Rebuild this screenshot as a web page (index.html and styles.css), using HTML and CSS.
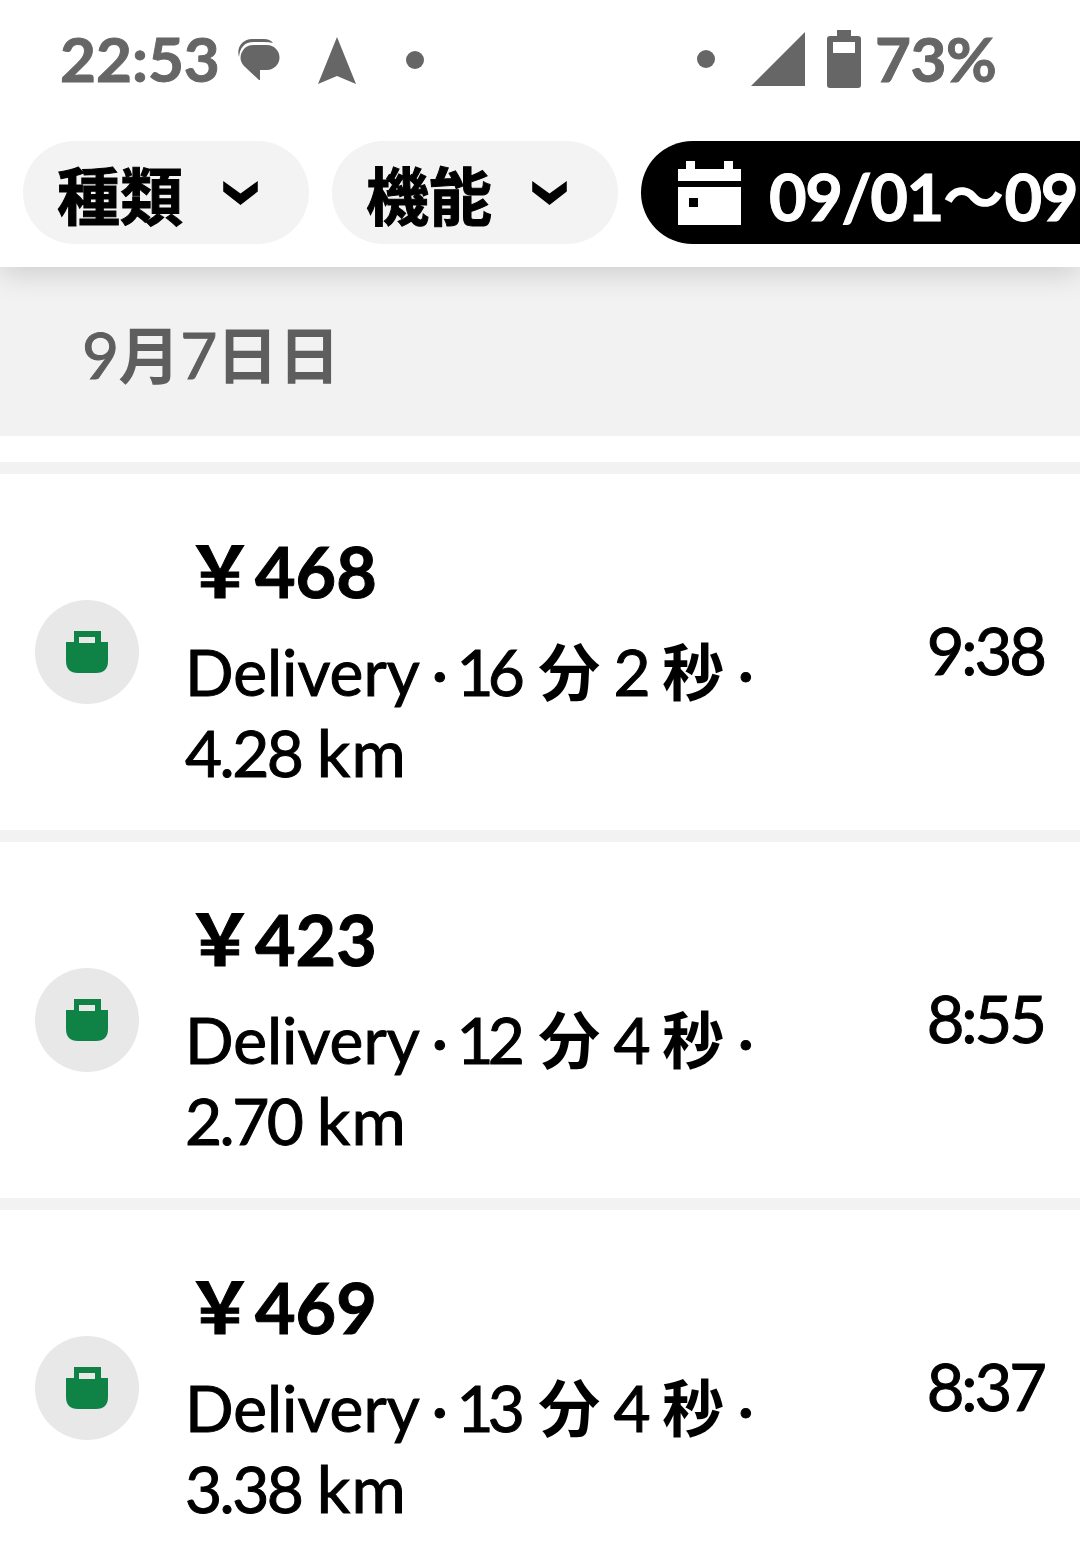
FILE: index.html
```
<!DOCTYPE html>
<html lang="ja">
<head>
  <meta charset="UTF-8">
  <meta name="viewport" content="width=device-width, initial-scale=1.0">
  <title>アクティビティ</title>
  <link rel="stylesheet" href="styles.css">
</head>
<body>
  <header class="header">
    <!-- Status bar -->
    <div class="status-bar">
      <span class="clock">22:53</span>
      <svg class="icon-chat" width="44" height="46" viewBox="0 0 44 46">
        <path d="M1 21C-2 11 5 3 14 3H26Q32 3 35 7Q31 6 26 6H16C6 6 2 12 1 21Z"/>
        <path d="M15 9H29A12.500 12.500 0 0 1 29 34H22V44H21L6 30A12.500 12.500 0 0 1 15 9Z"/>
      </svg>
      <svg class="icon-nav" width="40" height="48" viewBox="0 0 40 48">
        <path d="M20 0L39 47L20 39L1 47Z"/>
      </svg>
      <span class="dot"></span>
      <div class="status-right">
        <span class="dot"></span>
        <svg class="icon-signal" width="54" height="54" viewBox="0 0 54 54">
          <path d="M54 0V54H0Z"/>
        </svg>
        <svg class="icon-battery" width="34" height="58" viewBox="0 0 34 58">
          <path fill-rule="evenodd" d="M10 0H24V6H31Q34 6 34 9V55Q34 58 31 58H3Q0 58 0 55V9Q0 6 3 6H10ZM6 12V23H28V12Z"/>
        </svg>
        <span class="percent">73%</span>
      </div>
    </div>

    <!-- Filters -->
    <div class="filters">
      <button class="chip">
        <span class="jp">種類</span>
        <svg class="chevron" width="35" height="24" viewBox="0 0 36 25"><path d="M0 0L18 13L36 0V11L18 25L0 11Z"/></svg>
      </button>
      <button class="chip">
        <span class="jp">機能</span>
        <svg class="chevron" width="35" height="24" viewBox="0 0 36 25"><path d="M0 0L18 13L36 0V11L18 25L0 11Z"/></svg>
      </button>
      <button class="chip chip-active">
        <svg class="calendar" width="63" height="64" viewBox="0 0 63 64">
          <path fill-rule="evenodd" d="M8 0H17V8H46V0H55V8H63V20H0V8H8ZM0 26H63V64H0ZM11 37V46H20V37Z"/>
        </svg>
        <span class="range">09/01<span class="jp">～</span>09</span>
      </button>
    </div>
  </header>

  <main>
    <h2 class="date">9<span class="jp">月</span>7<span class="jp">日日</span></h2>

    <ul class="trips">
      <li class="trip">
        <div class="trip-icon">
          <svg width="42" height="42" viewBox="0 0 42 42"><path fill-rule="evenodd" d="M8 0H35V11H42V30Q42 42 30 42H12Q0 42 0 30V11H8ZM13 6V12H29V6Z"/></svg>
        </div>
        <div class="trip-info">
          <p class="fare"><span class="yen">￥</span>468</p>
          <p class="detail">Delivery · <span class="min">16</span> <span class="jp">分</span> <span class="sec">2</span> <span class="jp">秒</span> · <span class="dist">4.28</span> <span class="unit">km</span></p>
        </div>
        <time class="trip-time">9:38</time>
      </li>
      <li class="trip">
        <div class="trip-icon">
          <svg width="42" height="42" viewBox="0 0 42 42"><path fill-rule="evenodd" d="M8 0H35V11H42V30Q42 42 30 42H12Q0 42 0 30V11H8ZM13 6V12H29V6Z"/></svg>
        </div>
        <div class="trip-info">
          <p class="fare"><span class="yen">￥</span>423</p>
          <p class="detail">Delivery · <span class="min">12</span> <span class="jp">分</span> <span class="sec">4</span> <span class="jp">秒</span> · <span class="dist">2.70</span> <span class="unit">km</span></p>
        </div>
        <time class="trip-time">8:55</time>
      </li>
      <li class="trip">
        <div class="trip-icon">
          <svg width="42" height="42" viewBox="0 0 42 42"><path fill-rule="evenodd" d="M8 0H35V11H42V30Q42 42 30 42H12Q0 42 0 30V11H8ZM13 6V12H29V6Z"/></svg>
        </div>
        <div class="trip-info">
          <p class="fare"><span class="yen">￥</span>469</p>
          <p class="detail">Delivery · <span class="min">13</span> <span class="jp">分</span> <span class="sec">4</span> <span class="jp">秒</span> · <span class="dist">3.38</span> <span class="unit">km</span></p>
        </div>
        <time class="trip-time">8:37</time>
      </li>
    </ul>
  </main>
</body>
</html>
```
FILE: styles.css
```
* {
  box-sizing: border-box;
  margin: 0;
  padding: 0;
}

body {
  height: 1556px;
  overflow: hidden;
  background: #fff;
  color: #000;
  font-family: "Lato", "Noto Sans CJK JP", sans-serif;
}

.jp, .yen {
  font-family: "Noto Sans CJK JP", sans-serif;
  font-weight: 700;
  line-height: 1;
}

.jp {
  font-size: 62px;
  letter-spacing: 0;
  -webkit-text-stroke: 0;
}

.header {
  position: relative;
  height: 267px;
  background: #fff;
  box-shadow: 0 4px 30px rgba(0, 0, 0, 0.18);
}

/* Status bar */
.status-bar {
  display: flex;
  align-items: center;
  height: 120px;
  padding: 0 83px 2px 60px;
  color: #666;
  font-size: 62px;
  font-weight: 700;
  line-height: 116px;
  -webkit-text-stroke: 1px;
}

.status-bar svg {
  fill: #666;
}

.clock, .percent {
  padding-bottom: 3px;
}

.clock {
  width: 178px;
}

.icon-nav {
  margin: 4px 49px 0 35px;
}

.dot {
  width: 18px;
  height: 18px;
  margin-top: 2px;
  border-radius: 50%;
  background: #666;
}

.status-right {
  display: flex;
  align-items: center;
  margin-left: auto;
}

.status-right .dot {
  margin-top: 0;
}

.icon-signal {
  margin: 0 22px 0 36px;
}

.percent {
  width: 122px;
  margin-left: 14px;
  letter-spacing: -0.5px;
}

/* Filters */
.filters {
  display: flex;
  gap: 23px;
  padding: 21px 0 0 23px;
  overflow: hidden;
}

.chip {
  display: flex;
  flex: none;
  align-items: center;
  width: 286px;
  height: 103px;
  padding-left: 34px;
  border: none;
  border-radius: 52px;
  background: #f3f3f3;
  color: #000;
  font-family: inherit;
}

.chip > .jp {
  font-size: 63px;
  -webkit-text-stroke: 1px;
}

.chip .chevron {
  margin-left: 40px;
}

.chip-active {
  width: 560px;
  padding-left: 37px;
  background: #000;
  color: #fff;
}

.calendar {
  margin-right: 28px;
  fill: #fff;
}

.range {
  padding-top: 6px;
  font-size: 65px;
  font-weight: 700;
  line-height: 1;
  letter-spacing: -1.5px;
  -webkit-text-stroke: 1px;
}

/* Date header */
.date {
  height: 169px;
  padding: 0 82px;
  background: #f2f2f2;
  color: #5e5e5e;
  font-size: 64px;
  font-weight: 400;
  line-height: 176px;
  letter-spacing: -1px;
  -webkit-text-stroke: 1px;
}

/* Trips */
.trips {
  padding-top: 26px;
  list-style: none;
}

.trip {
  display: flex;
  align-items: center;
  height: 368px;
  padding: 0 35px;
  border-top: 12px solid #f2f2f2;
}

.trip-icon {
  display: flex;
  align-items: center;
  justify-content: center;
  width: 104px;
  height: 104px;
  border-radius: 50%;
  background: #e8e8e8;
}

.trip-icon svg {
  fill: #0e8345;
}

.trip-info {
  width: 640px;
  margin-left: 46px;
  padding-top: 14px;
}

.fare {
  height: 106px;
  font-size: 70px;
  font-weight: 700;
  line-height: 92px;
  -webkit-text-stroke: 1px;
}

.detail {
  font-size: 64px;
  line-height: 81px;
  word-spacing: -3px;
  -webkit-text-stroke: 1px;
}

.min {
  margin: 0 6px 0 -5px;
  letter-spacing: -6px;
}

.sec {
  margin-right: -2px;
}

.dist {
  letter-spacing: -2.5px;
}

.unit {
  margin-left: 2px;
  font-size: 66px;
  line-height: 1;
  letter-spacing: 1px;
}

.trip-time {
  margin: -5px 1px 0 auto;
  font-size: 65px;
  letter-spacing: -3px;
  -webkit-text-stroke: 1px;
}
```
